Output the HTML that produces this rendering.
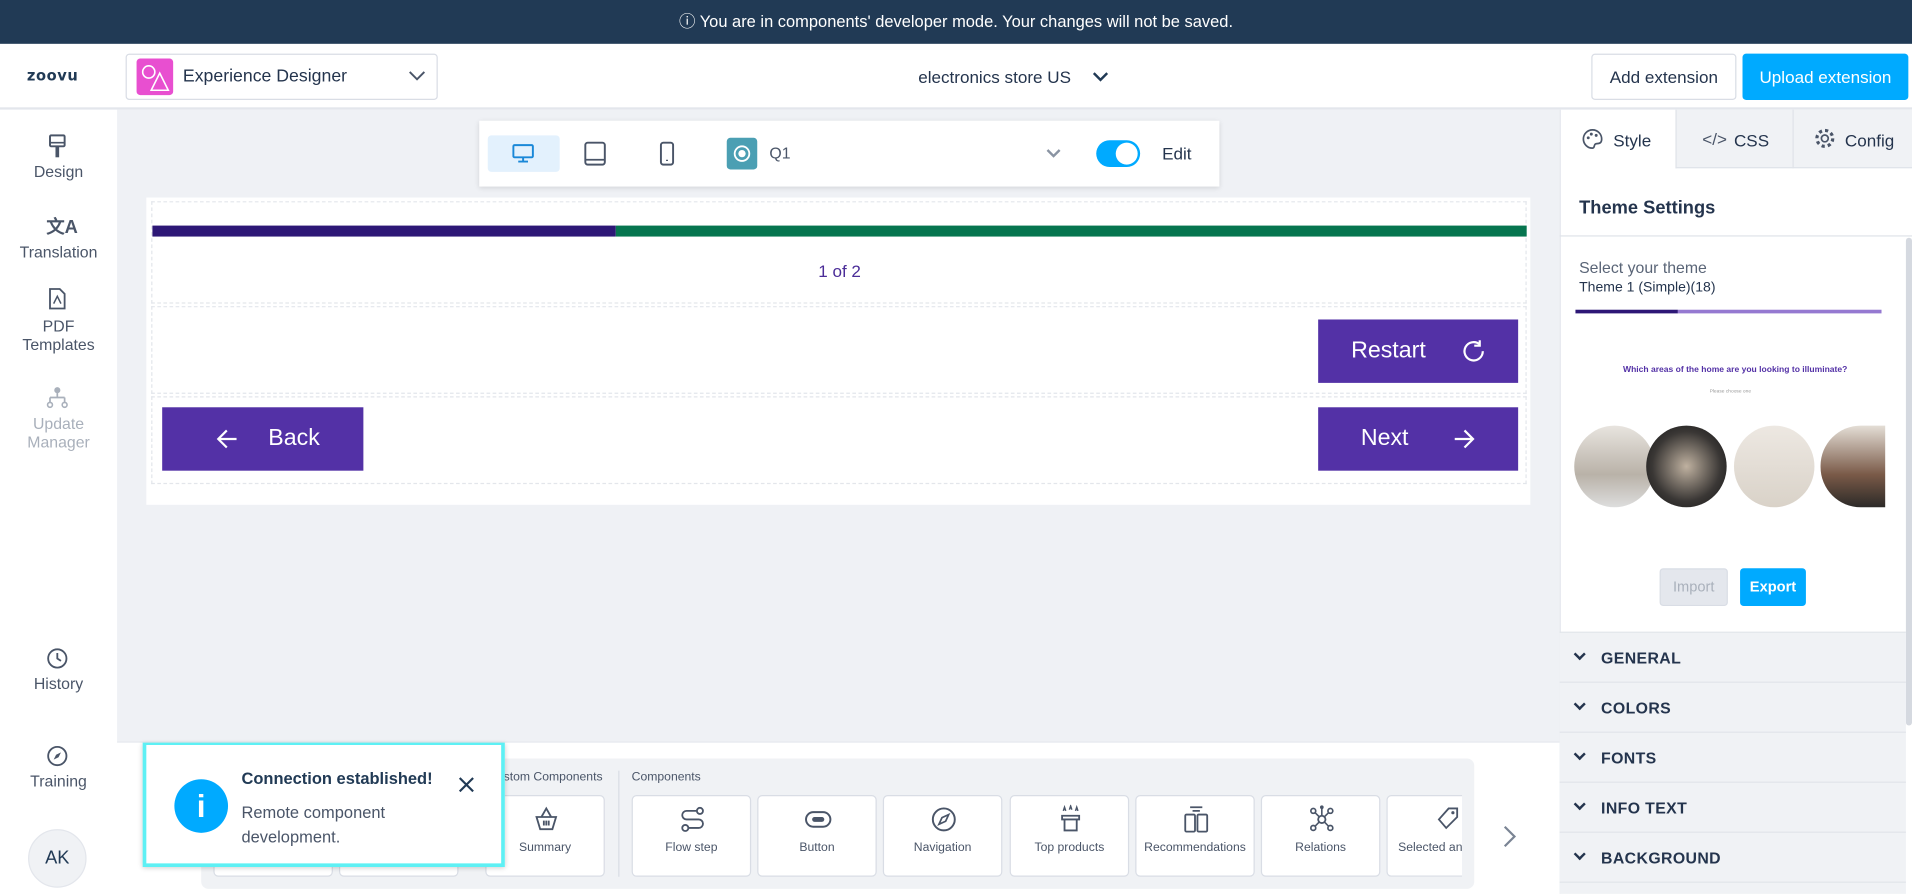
<!DOCTYPE html>
<html><head><meta charset="utf-8">
<style>
*{box-sizing:border-box;margin:0;padding:0}
html,body{width:1912px;height:894px;overflow:hidden;background:#fff;font-family:"Liberation Sans",sans-serif;color:#24344d}
#w{position:absolute;left:0;top:0;width:1568px;height:733px;transform:scale(1.21939);transform-origin:0 0;overflow:hidden}
.a{position:absolute}
.t{white-space:nowrap}
.side{position:absolute;left:0;width:96px;text-align:center;font-size:13px;color:#4a5568;line-height:15px}
.card{position:absolute;top:652px;width:98px;height:67px;background:#fff;border:1px solid #d9dde5;border-radius:4px;font-size:10px;color:#4a5568;text-align:center}
.card span{position:absolute;left:0;right:0;top:37px}
.card svg{position:absolute;left:38px;top:7px}
.acc{position:absolute;left:1279px;width:284px;height:41px;background:#f0f2f5;border-bottom:1px solid #dfe3e9;font-size:13px;font-weight:bold;color:#24344d;letter-spacing:.3px}
.acc b{position:absolute;left:34px;top:13px}
.acc i{position:absolute;left:13px;top:14px;width:7px;height:7px;border-right:2px solid #24344d;border-bottom:2px solid #24344d;transform:rotate(45deg)}
.dash{position:absolute;border:1px dashed #e3e6eb}
.pbtn{position:absolute;background:#5331a6;color:#fff;font-size:19px}
</style></head><body><div id="w">
<div class="a" style="left:0;top:0;width:1568px;height:36px;background:#213a55;color:#fff;font-size:13.5px;text-align:center;line-height:36px">ⓘ You are in components' developer mode. Your changes will not be saved.</div>
<div class="a" style="left:0;top:36px;width:1568px;height:54px;background:#fff;border-bottom:2px solid #e3e6ec"></div>
<div class="a t" style="left:22px;top:55px;font-size:12px;font-weight:bold;letter-spacing:.5px;color:#213a55;font-family:'DejaVu Sans',sans-serif">zoovu</div>
<div class="a" style="left:103px;top:44px;width:256px;height:38px;border:1px solid #d9dde5;border-radius:3px"></div>
<div class="a" style="left:112px;top:48px;width:30px;height:30px;background:#e84fd0;border-radius:3px"></div>
<svg class="a" style="left:112px;top:48px" width="30" height="30"><circle cx="10" cy="11" r="5" fill="none" stroke="#fff" stroke-width="1.3"/><path d="M19 12 L26 26 L12 26 Z" fill="none" stroke="#fff" stroke-width="1.3"/></svg>
<div class="a t" style="left:150px;top:55px;font-size:14.5px">Experience Designer</div>
<svg class="a" style="left:335px;top:58px" width="14" height="9"><path d="M1 1 L7 7 L13 1" fill="none" stroke="#4a5568" stroke-width="1.6"/></svg>
<div class="a t" style="left:753px;top:55px;font-size:14px">electronics store US</div>
<svg class="a" style="left:896px;top:59px" width="13" height="9"><path d="M1 1 L6.5 6.5 L12 1" fill="none" stroke="#213a55" stroke-width="2"/></svg>
<div class="a" style="left:1305px;top:44px;width:119px;height:38px;border:1px solid #d9dde5;border-radius:3px;font-size:14px;text-align:center;line-height:36px">Add extension</div>
<div class="a" style="left:1429px;top:44px;width:136px;height:38px;background:#00aaff;border-radius:3px;color:#fff;font-size:14px;text-align:center;line-height:38px">Upload extension</div>
<div class="a" style="left:0;top:90px;width:96px;height:643px;background:#fff"></div>
<svg class="a" style="left:39px;top:110px" width="16" height="20"><rect x="2" y="1" width="12" height="9" rx="1" fill="none" stroke="#4a5568" stroke-width="1.6"/><path d="M2 7 H14" stroke="#4a5568" stroke-width="1.4"/><rect x="6.5" y="10" width="3" height="9" fill="#4a5568"/></svg>
<div class="side" style="top:133px">Design</div>
<div class="a" style="left:38px;top:175px;font-size:15px;color:#4a5568;font-weight:bold">文A</div>
<div class="side" style="top:199px">Translation</div>
<svg class="a" style="left:40px;top:236px" width="14" height="18"><path d="M1 1 H9 L13 5 V17 H1 Z" fill="none" stroke="#4a5568" stroke-width="1.5"/><path d="M4 13 L7 7 L10 13" fill="none" stroke="#4a5568" stroke-width="1.2"/></svg>
<div class="side" style="top:260px">PDF<br>Templates</div>
<svg class="a" style="left:38px;top:317px" width="18" height="18"><circle cx="9" cy="3" r="2.5" fill="#a9b0bb"/><path d="M9 5 V9 M3 9 H15 M3 9 V13 M15 9 V13" stroke="#a9b0bb" stroke-width="1.4" fill="none"/><circle cx="3" cy="15" r="2" fill="none" stroke="#a9b0bb" stroke-width="1.3"/><circle cx="15" cy="15" r="2" fill="none" stroke="#a9b0bb" stroke-width="1.3"/></svg>
<div class="side" style="top:340px;color:#a9b0bb">Update<br>Manager</div>
<svg class="a" style="left:38px;top:531px" width="18" height="18"><circle cx="9" cy="9" r="7.5" fill="none" stroke="#4a5568" stroke-width="1.5"/><path d="M9 4.5 V9 L12 11" fill="none" stroke="#4a5568" stroke-width="1.5"/></svg>
<div class="side" style="top:553px">History</div>
<svg class="a" style="left:38px;top:611px" width="18" height="18"><circle cx="9" cy="9" r="7.5" fill="none" stroke="#4a5568" stroke-width="1.5"/><path d="M12 6 L10 10 L6 12 L8 8 Z" fill="#4a5568"/></svg>
<div class="side" style="top:633px">Training</div>
<div class="a" style="left:23px;top:680px;width:48px;height:48px;border-radius:50%;background:#f0f2f5;border:1px solid #e3e6ec;font-size:15px;text-align:center;line-height:46px;color:#213a55">AK</div>
<div class="a" style="left:96px;top:90px;width:1183px;height:518px;background:#eff1f5"></div>
<div class="a" style="left:96px;top:608px;width:1183px;height:125px;background:#fff;border-top:1px solid #e3e6ec"></div>
<div class="a" style="left:393px;top:99px;width:607px;height:54px;background:#fff;box-shadow:0 1px 4px rgba(0,0,0,.12)"></div>
<div class="a" style="left:400px;top:111px;width:59px;height:30px;background:#e3f1fd;border-radius:3px"></div>
<svg class="a" style="left:420px;top:118px" width="18" height="16"><rect x="1" y="1" width="16" height="10" rx="1" fill="none" stroke="#1a88d8" stroke-width="1.6"/><path d="M9 11 V14 M5 14.5 H13" stroke="#1a88d8" stroke-width="1.6"/></svg>
<svg class="a" style="left:479px;top:116px" width="18" height="20"><rect x="1" y="1" width="16" height="18" rx="2" fill="none" stroke="#4a5568" stroke-width="1.6"/><path d="M1 15 H17" stroke="#4a5568" stroke-width="1.4"/></svg>
<svg class="a" style="left:541px;top:116px" width="12" height="20"><rect x="1" y="1" width="10" height="18" rx="2" fill="none" stroke="#4a5568" stroke-width="1.6"/><path d="M6 15 V16" stroke="#4a5568" stroke-width="1.6"/></svg>
<div class="a" style="left:596px;top:113px;width:25px;height:26px;background:#4b9fb3;border-radius:3px"></div>
<svg class="a" style="left:596px;top:113px" width="25" height="26"><circle cx="12.5" cy="13" r="6" fill="none" stroke="#fff" stroke-width="1.5"/><circle cx="12.5" cy="13" r="3" fill="#fff"/></svg>
<div class="a t" style="left:631px;top:118px;font-size:13px;color:#4a5568">Q1</div>
<svg class="a" style="left:858px;top:122px" width="12" height="8"><path d="M1 1 L6 6 L11 1" fill="none" stroke="#8a94a3" stroke-width="2"/></svg>
<div class="a" style="left:899px;top:115px;width:36px;height:22px;background:#00aaff;border-radius:11px"></div>
<div class="a" style="left:915px;top:117px;width:18px;height:18px;background:#fff;border-radius:50%"></div>
<div class="a t" style="left:953px;top:118px;font-size:14px">Edit</div>
<div class="a" style="left:120px;top:162px;width:1135px;height:252px;background:#fff"></div>
<div class="dash" style="left:124px;top:165px;width:1128px;height:84px"></div>
<div class="a" style="left:125px;top:185px;width:380px;height:9px;background:#2d1776"></div>
<div class="a" style="left:505px;top:185px;width:747px;height:9px;background:#06754f"></div>
<div class="a t" style="left:671px;top:214px;font-size:14px;color:#4b2d98">1 of 2</div>
<div class="dash" style="left:124px;top:251px;width:1128px;height:72px"></div>
<div class="dash" style="left:124px;top:325px;width:1128px;height:72px"></div>
<div class="pbtn" style="left:1081px;top:262px;width:164px;height:52px"><span class="a t" style="left:27px;top:15px">Restart</span>
<svg class="a" style="left:117px;top:15px" width="22" height="22"><path d="M18 11 A7.5 7.5 0 1 1 15.5 5.5" fill="none" stroke="#fff" stroke-width="1.8"/><path d="M15.5 2 V6.5 H11" fill="none" stroke="#fff" stroke-width="1.8"/></svg></div>
<div class="pbtn" style="left:133px;top:334px;width:165px;height:52px"><span class="a t" style="left:87px;top:15px">Back</span>
<svg class="a" style="left:44px;top:17px" width="18" height="18"><path d="M17 9 H2 M9 2 L2 9 L9 16" fill="none" stroke="#fff" stroke-width="1.8"/></svg></div>
<div class="pbtn" style="left:1081px;top:334px;width:164px;height:52px"><span class="a t" style="left:35px;top:15px">Next</span>
<svg class="a" style="left:111px;top:17px" width="18" height="18"><path d="M1 9 H16 M9 2 L16 9 L9 16" fill="none" stroke="#fff" stroke-width="1.8"/></svg></div>
<div class="a" style="left:165px;top:622px;width:1044px;height:107px;background:#f0f2f5;border-radius:6px"></div>
<div class="card" style="left:175px"></div><div class="card" style="left:278px"></div>
<div class="a t" style="left:413px;top:632px;font-size:10px;color:#4a5568">stom Components</div>
<div class="a" style="left:507px;top:632px;width:1px;height:87px;background:#d9dde5"></div>
<div class="a t" style="left:518px;top:632px;font-size:10px;color:#4a5568">Components</div>
<div class="card" style="left:398px"><svg width="22" height="24"><path d="M3 10 H19 L16 20 H6 Z M7 10 L11 3 L15 10 M9 13 V17 M11 13 V17 M13 13 V17" fill="none" stroke="#4a5568" stroke-width="1.5"/></svg><span>Summary</span></div>
<div class="card" style="left:518px"><svg width="22" height="24"><circle cx="17" cy="5" r="2.5" fill="none" stroke="#4a5568" stroke-width="1.5"/><circle cx="5" cy="19" r="2.5" fill="none" stroke="#4a5568" stroke-width="1.5"/><path d="M14 5 H6 A3.5 3.5 0 0 0 6 12 H16 A3.5 3.5 0 0 1 16 19 H8" fill="none" stroke="#4a5568" stroke-width="1.5"/></svg><span>Flow step</span></div>
<div class="card" style="left:621px"><svg width="22" height="24"><rect x="1" y="6" width="20" height="12" rx="6" fill="none" stroke="#4a5568" stroke-width="1.6"/><rect x="6" y="10" width="10" height="4" rx="2" fill="#4a5568"/></svg><span>Button</span></div>
<div class="card" style="left:724px"><svg width="22" height="24"><circle cx="11" cy="12" r="9" fill="none" stroke="#4a5568" stroke-width="1.6"/><path d="M15 8 L12.5 13.5 L7 16 L9.5 10.5 Z" fill="none" stroke="#4a5568" stroke-width="1.4"/></svg><span>Navigation</span></div>
<div class="card" style="left:828px"><svg width="22" height="24"><path d="M5 5 L6 2 L7 5 M10 4 L11 1 L12 4 M15 5 L16 2 L17 5" fill="none" stroke="#4a5568" stroke-width="1.2"/><path d="M4 9 H18 V12 H4 Z M6 12 V21 H16 V12" fill="none" stroke="#4a5568" stroke-width="1.5"/></svg><span>Top products</span></div>
<div class="card" style="left:931px"><svg width="22" height="24"><path d="M6 2 H16 M8 5 H14" stroke="#4a5568" stroke-width="1.5"/><rect x="2" y="8" width="8" height="14" rx="1" fill="none" stroke="#4a5568" stroke-width="1.5"/><rect x="12" y="8" width="8" height="14" rx="1" fill="none" stroke="#4a5568" stroke-width="1.5"/></svg><span>Recommendations</span></div>
<div class="card" style="left:1034px"><svg width="22" height="24"><circle cx="11" cy="12" r="3" fill="none" stroke="#4a5568" stroke-width="1.5"/><circle cx="4" cy="5" r="2" fill="none" stroke="#4a5568" stroke-width="1.4"/><circle cx="18" cy="5" r="2" fill="none" stroke="#4a5568" stroke-width="1.4"/><circle cx="4" cy="19" r="2" fill="none" stroke="#4a5568" stroke-width="1.4"/><circle cx="18" cy="19" r="2" fill="none" stroke="#4a5568" stroke-width="1.4"/><circle cx="11" cy="2" r="1.5" fill="#4a5568"/><path d="M5.5 6.5 L9 10 M16.5 6.5 L13 10 M5.5 17.5 L9 14 M16.5 17.5 L13 14 M11 3 V9" stroke="#4a5568" stroke-width="1.3"/></svg><span>Relations</span></div>
<div class="a" style="left:1137px;top:652px;width:62px;height:67px;overflow:hidden"><div class="card" style="left:0;top:0"><svg width="22" height="24"><path d="M4 12 L12 3 H19 V10 L10 19 Z" fill="none" stroke="#4a5568" stroke-width="1.5"/><circle cx="15.5" cy="6.5" r="1.3" fill="#4a5568"/></svg><span>Selected answers</span></div></div>
<svg class="a" style="left:1232px;top:676px" width="12" height="20"><path d="M2 2 L10 10 L2 18" fill="none" stroke="#7a8494" stroke-width="1.8"/></svg>
<div class="a" style="left:117px;top:609px;width:297px;height:102px;background:#fff;border:3px solid #5ef0f4;border-top-width:2px;box-shadow:0 1px 4px rgba(0,0,0,.2)"></div>
<div class="a" style="left:143px;top:639px;width:44px;height:44px;border-radius:50%;background:#00aaff;color:#fff;font-size:26px;font-weight:bold;text-align:center;line-height:44px">i</div>
<div class="a t" style="left:198px;top:631px;font-size:13.5px;font-weight:bold;color:#213a55">Connection established!</div>
<div class="a" style="left:198px;top:657px;font-size:13.5px;line-height:20px;color:#4a5568">Remote component<br>development.</div>
<svg class="a" style="left:376px;top:637px" width="13" height="13"><path d="M1 1 L12 12 M12 1 L1 12" stroke="#213a55" stroke-width="1.8"/></svg>
<div class="a" style="left:1279px;top:90px;width:289px;height:643px;background:#fff;border-left:1px solid #e3e6ec"></div>
<div class="a" style="left:1374px;top:90px;width:194px;height:48px;background:#f0f2f5;border-bottom:1px solid #dfe3e9;border-left:1px solid #dfe3e9"></div>
<div class="a" style="left:1470px;top:90px;width:1px;height:48px;background:#dfe3e9"></div>
<svg class="a" style="left:1297px;top:105px" width="18" height="18"><path d="M9 1.5 A7.5 7.5 0 1 0 9 16.5 C11 16.5 10 13.5 11.5 13 C13 12.5 16.5 13.5 16.5 9 A7.5 7.5 0 0 0 9 1.5 Z" fill="none" stroke="#4a5568" stroke-width="1.4"/><circle cx="5.5" cy="8" r="1.2" fill="#4a5568"/><circle cx="8" cy="5" r="1.2" fill="#4a5568"/><circle cx="12" cy="6" r="1.2" fill="#4a5568"/></svg>
<div class="a t" style="left:1323px;top:107px;font-size:14px">Style</div>
<div class="a t" style="left:1396px;top:106px;font-size:14px;color:#4a5568">&lt;/&gt;</div>
<div class="a t" style="left:1422px;top:107px;font-size:14px">CSS</div>
<svg class="a" style="left:1487px;top:104px" width="19" height="19"><circle cx="9.5" cy="9.5" r="2.8" fill="none" stroke="#4a5568" stroke-width="1.4"/><circle cx="9.5" cy="9.5" r="6.5" fill="none" stroke="#4a5568" stroke-width="2.6" stroke-dasharray="2.6 2.5"/></svg>
<div class="a t" style="left:1513px;top:107px;font-size:14px">Config</div>
<div class="a t" style="left:1295px;top:162px;font-size:15px;font-weight:bold">Theme Settings</div>
<div class="a" style="left:1279px;top:193px;width:289px;height:1px;background:#dfe3e9"></div>
<div class="a" style="left:1563px;top:195px;width:5px;height:400px;background:#d5d9e0;border-radius:3px"></div>
<div class="a t" style="left:1295px;top:212px;font-size:13px;color:#5a6577">Select your theme</div>
<div class="a t" style="left:1295px;top:230px;font-size:11.5px">Theme 1 (Simple)(18)</div>
<div class="a" style="left:1292px;top:254px;width:84px;height:3px;background:#2d1776"></div>
<div class="a" style="left:1376px;top:254px;width:167px;height:3px;background:#9579d1"></div>
<div class="a t" style="left:1331px;top:300px;font-size:7px;font-weight:bold;color:#5331a6">Which areas of the home are you looking to illuminate?</div>
<div class="a t" style="left:1402px;top:318px;font-size:4px;color:#999">Please choose one</div>
<div class="a" style="left:1291px;top:349px;width:66px;height:67px;border-radius:50%;background:linear-gradient(#e8e4df,#b9b2a8 60%,#ddd)"></div>
<div class="a" style="left:1350px;top:349px;width:66px;height:67px;border-radius:50%;background:radial-gradient(#bfb1a0,#3a3735 60%,#111)"></div>
<div class="a" style="left:1422px;top:349px;width:66px;height:67px;border-radius:50%;background:linear-gradient(#ede8e2,#d9d2c8)"></div>
<div class="a" style="left:1493px;top:349px;width:53px;height:67px;border-radius:33px 0 0 33px;background:linear-gradient(#e4ded6,#7a5a48 60%,#2c2a28)"></div>
<div class="a" style="left:1361px;top:466px;width:56px;height:31px;background:#e4e7ed;border:1px solid #d9dde5;border-radius:3px;color:#a9b0bb;font-size:12px;text-align:center;line-height:29px">Import</div>
<div class="a" style="left:1427px;top:466px;width:54px;height:31px;background:#00aaff;border-radius:3px;color:#fff;font-size:12px;font-weight:bold;text-align:center;line-height:31px">Export</div>
<div class="a" style="left:1279px;top:518px;width:284px;height:1px;background:#dfe3e9"></div>
<div class="acc" style="top:519px"><i></i><b>GENERAL</b></div>
<div class="acc" style="top:560px"><i></i><b>COLORS</b></div>
<div class="acc" style="top:601px"><i></i><b>FONTS</b></div>
<div class="acc" style="top:642px"><i></i><b>INFO TEXT</b></div>
<div class="acc" style="top:683px"><i></i><b>BACKGROUND</b></div>
<div class="acc" style="top:724px"></div>
</div></body></html>
